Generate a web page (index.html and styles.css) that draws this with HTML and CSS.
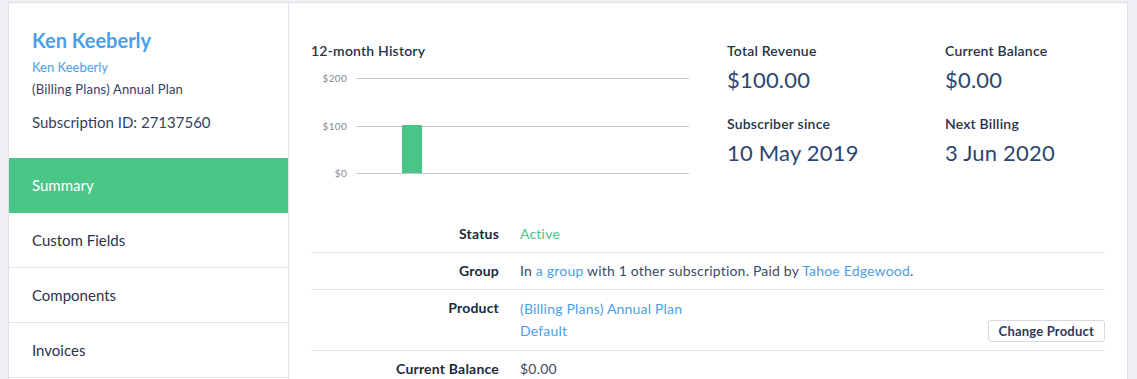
FILE: index.html
```html
<!DOCTYPE html>
<html lang="en">
<head>
    <meta charset="UTF-8">
    <title>Subscription Summary</title>
    <link rel="stylesheet" href="styles.css">
</head>
<body>
    <div class="card">
        <aside class="sidebar">
            <div class="customer">
                <a href="#" class="customer-name">Ken Keeberly</a>
                <a href="#" class="customer-link">Ken Keeberly</a>
                <div class="customer-plan">(Billing Plans) Annual Plan</div>
                <div class="subscription-id">Subscription ID: 27137560</div>
            </div>
            <ul class="nav">
                <li class="active">Summary</li>
                <li>Custom Fields</li>
                <li>Components</li>
                <li>Invoices</li>
            </ul>
        </aside>

        <main class="main">
            <div class="overview">
                <div class="history">
                    <div class="section-title">12-month History</div>
                    <svg class="chart" width="378" height="110" viewBox="0 0 378 110">
                        <g class="axis">
                            <line x1="45" y1="8.5" x2="378" y2="8.5"/>
                            <line x1="45" y1="56.5" x2="378" y2="56.5"/>
                            <line x1="45" y1="103.5" x2="378" y2="103.5"/>
                        </g>
                        <g class="axis-labels">
                            <text x="36" y="12">$200</text>
                            <text x="36" y="60">$100</text>
                            <text x="36" y="107">$0</text>
                        </g>
                        <rect class="bar" x="91" y="55" width="20" height="48"/>
                    </svg>
                </div>
                <div class="stats">
                    <div class="stat">
                        <div class="stat-label">Total Revenue</div>
                        <div class="stat-value">$100.00</div>
                    </div>
                    <div class="stat">
                        <div class="stat-label">Current Balance</div>
                        <div class="stat-value">$0.00</div>
                    </div>
                    <div class="stat">
                        <div class="stat-label">Subscriber since</div>
                        <div class="stat-value">10 May 2019</div>
                    </div>
                    <div class="stat">
                        <div class="stat-label">Next Billing</div>
                        <div class="stat-value">3 Jun 2020</div>
                    </div>
                </div>
            </div>

            <div class="details">
                <div class="row">
                    <div class="row-label">Status</div>
                    <div class="row-value status-active">Active</div>
                </div>
                <div class="row">
                    <div class="row-label">Group</div>
                    <div class="row-value">In <a href="#">a group</a> with 1 other subscription. Paid by <a href="#">Tahoe Edgewood</a>.</div>
                </div>
                <div class="row">
                    <div class="row-label">Product</div>
                    <div class="row-value product">
                        <div>
                            <a href="#">(Billing Plans) Annual Plan</a><br>
                            <a href="#">Default</a>
                        </div>
                        <button class="btn">Change Product</button>
                    </div>
                </div>
                <div class="row">
                    <div class="row-label">Current Balance</div>
                    <div class="row-value">$0.00</div>
                </div>
            </div>
        </main>
    </div>
</body>
</html>
```

FILE: styles.css
```css
body {
    margin: 0;
    background-color: #eff0f5;
    font-family: Lato, "Open Sans", sans-serif;
    color: #26324a;
}
a {
    color: #4a9fe9;
    text-decoration: none;
}
.card {
    display: flex;
    width: 1118px;
    margin: 2px 0 0 8px;
    background-color: #fff;
    border: 1px solid #dfe1e7;
    border-bottom: none;
    min-height: 400px;
}
.sidebar {
    width: 279px;
    flex-shrink: 0;
    border-right: 1px solid #e2e4e8;
}
.customer {
    padding: 25px 23px 26px 23px;
}
.customer-name {
    display: block;
    font-size: 20px;
    font-weight: 700;
    line-height: 24px;
}
.customer-link {
    display: block;
    font-size: 13px;
    margin-top: 6px;
    line-height: 18px;
}
.customer-plan {
    font-size: 13px;
    letter-spacing: 0.2px;
    line-height: 18px;
    margin-top: 4px;
    color: #34415e;
}
.subscription-id {
    font-size: 15px;
    line-height: 20px;
    margin-top: 14px;
    color: #34415e;
}
.nav {
    list-style: none;
    margin: 0;
    padding: 0;
}
.nav li {
    height: 54px;
    line-height: 54px;
    padding-left: 23px;
    font-size: 15px;
    color: #2a3347;
    border-bottom: 1px solid #e2e4e8;
}
.nav li.active {
    background-color: #49c587;
    color: #fff;
    border-bottom-color: #49c587;
}
.main {
    flex: 1;
    min-width: 0;
    padding: 0 22px;
}
.overview {
    display: flex;
    padding-top: 39px;
    height: 174px;
}
.history {
    width: 378px;
    flex-shrink: 0;
}
.section-title {
    font-size: 14px;
    font-weight: 600;
    letter-spacing: 0.2px;
    line-height: 18px;
    color: #26324a;
}
.chart {
    display: block;
    margin-top: 10px;
}
.axis line {
    stroke: #c4c7cc;
    stroke-width: 1;
}
.axis-labels text {
    font-size: 10px;
    fill: #85898f;
    text-anchor: end;
    font-family: Lato, sans-serif;
    letter-spacing: 0.3px;
}
.bar {
    fill: #49c587;
}
.stats {
    flex: 1;
    display: grid;
    grid-template-columns: 218px 1fr;
    align-content: start;
    row-gap: 20px;
    margin-left: 38px;
}
.stat-label {
    font-size: 14px;
    font-weight: 600;
    letter-spacing: 0.2px;
    line-height: 18px;
    color: #26324a;
}
.stat-value {
    font-size: 22px;
    letter-spacing: 0.2px;
    line-height: 30px;
    margin-top: 5px;
    color: #2d4670;
}
.details {
    font-size: 14px;
    letter-spacing: 0.2px;
}
.row {
    display: flex;
    padding: 8px 0;
    line-height: 20px;
    border-bottom: 1px solid #e2e4e8;
}
.row-label {
    width: 188px;
    flex-shrink: 0;
    text-align: right;
    font-weight: 700;
    color: #202a3c;
    margin-right: 21px;
}
.row-value {
    flex: 1;
    color: #3c4a66;
}
.status-active {
    color: #49c587;
}
.product {
    display: flex;
    justify-content: space-between;
    align-items: flex-end;
    line-height: 22px;
}
.btn {
    font-family: inherit;
    font-size: 13px;
    font-weight: 700;
    letter-spacing: 0.2px;
    color: #2d3a58;
    background-color: #fff;
    border: 1px solid #d6d9de;
    border-radius: 3px;
    height: 22px;
    padding: 0 10px;
}
```
